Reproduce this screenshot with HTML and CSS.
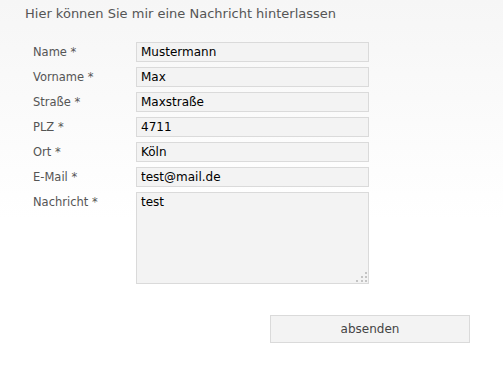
FILE: index.html
```html
<!DOCTYPE html>
<html lang="de">
  <head>
    <meta charset="UTF-8" />
    <title>Kontakt</title>
    <link rel="stylesheet" href="styles.css">
  </head>
  <body>
    <div class="container">
      <p class="intro">Hier können Sie mir eine Nachricht hinterlassen</p>

      <form class="contact-form">
        <label for="name">Name *</label>
        <input type="text" id="name" value="Mustermann" />

        <label for="vorname">Vorname *</label>
        <input type="text" id="vorname" value="Max" />

        <label for="strasse">Straße *</label>
        <input type="text" id="strasse" value="Maxstraße" />

        <label for="plz">PLZ *</label>
        <input type="text" id="plz" value="4711" />

        <label for="ort">Ort *</label>
        <input type="text" id="ort" value="Köln" />

        <label for="email">E-Mail *</label>
        <input type="text" id="email" value="test@mail.de" />

        <label for="nachricht">Nachricht *</label>
        <div class="textarea-wrap">
          <textarea id="nachricht">test</textarea>
          <span class="grip"></span>
        </div>

        <div class="actions">
          <button type="submit" class="btn">absenden</button>
        </div>
      </form>
    </div>
  </body>
</html>
```

FILE: styles.css
```css
html,
body {
  margin: 0;
  height: 100%;
}
body {
  font-family: "DejaVu Sans", Verdana, sans-serif;
  background: linear-gradient(#f6f6f6, #ffffff 220px);
  color: #555;
}
.container {
  padding: 6px 25px 0;
}
.intro {
  margin: 0;
  font-size: 13px;
  line-height: 16px;
}
.contact-form {
  display: grid;
  grid-template-columns: 103px 233px;
  row-gap: 5px;
  margin: 20px 0 0 8px;
}
.contact-form label {
  font-size: 11.5px;
  line-height: 20px;
}
.contact-form input,
.contact-form textarea {
  box-sizing: border-box;
  width: 233px;
  height: 20px;
  margin: 0;
  padding: 0 4px;
  border: 1px solid #dadada;
  background: #f3f3f3;
  font-family: "DejaVu Sans", Verdana, sans-serif;
  font-size: 12px;
  color: #000;
  outline: none;
}
.textarea-wrap {
  position: relative;
  height: 92px;
}
.contact-form textarea {
  display: block;
  height: 92px;
  padding: 2px 4px;
  resize: none;
}
/* dotted resize grip */
.grip {
  position: absolute;
  right: 2px;
  bottom: 2px;
  width: 2px;
  height: 2px;
  background: #c4c4c4;
  box-shadow:
    -4px 0 #c4c4c4,
    -9px 0 #c4c4c4,
    0 -4px #c4c4c4,
    -4px -4px #c4c4c4,
    0 -8px #c4c4c4;
}
.actions {
  grid-column: 1 / 3;
  display: flex;
  justify-content: flex-end;
  margin: 26px -101px 0 0;
}
.btn {
  width: 200px;
  height: 28px;
  border: 1px solid #dadada;
  background: #f3f3f3;
  font-family: "DejaVu Sans", Verdana, sans-serif;
  font-size: 12px;
  color: #444;
  cursor: pointer;
}
```
